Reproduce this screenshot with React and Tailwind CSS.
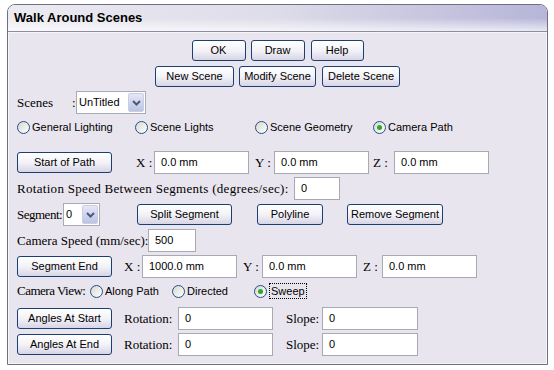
import React from "react";

const sans = "font-[family-name:Liberation_Sans,Arial,sans-serif] text-[11px] text-black";
const serif = "font-[family-name:Liberation_Serif,Times_New_Roman,serif] text-[13px] text-black whitespace-pre";

function Btn({ className, children }) {
  return (
    <button
      className={`flex h-[21px] items-center justify-center rounded-[3px] border border-[#1b3f73] bg-gradient-to-b from-white via-[#f3f2f7] to-[#d8d5e5] leading-none ${sans} ${className}`}
    >
      {children}
    </button>
  );
}

function Field({ className, value }) {
  return (
    <div className={`flex h-[23px] items-center border border-[#a9a9b3] bg-white pl-[6px] ${sans} ${className}`}>
      {value}
    </div>
  );
}

function Chevron() {
  return (
    <svg width="9" height="6" viewBox="0 0 9 6">
      <path d="M1 1 L4.5 4.5 L8 1" fill="none" stroke="#4a5a7e" strokeWidth="2" />
    </svg>
  );
}

function Select({ className, value }) {
  return (
    <div className={`flex h-[23px] border border-[#a5acb5] bg-white ${className}`}>
      <div className={`flex flex-1 items-center pl-[2px] ${sans}`}>{value}</div>
      <div className="m-[1px] flex w-[16px] items-center justify-center rounded-[2px] border border-[#c9cee8] bg-gradient-to-b from-[#e4e7f5] to-[#bcc4e2]">
        <Chevron />
      </div>
    </div>
  );
}

function Radio({ checked, label, className, focus }) {
  return (
    <div className={`flex items-center gap-[2px] ${className || ""}`}>
      <span className="flex h-[13px] w-[13px] items-center justify-center rounded-full border border-[#22508a] bg-gradient-to-br from-[#d8d8d0] to-white">
        {checked && <span className="h-[5px] w-[5px] rounded-full bg-[#2da82d]" />}
      </span>
      <span className={`${sans} ${focus ? "border border-dotted border-black px-[1px] leading-[14px]" : ""}`}>{label}</span>
    </div>
  );
}

export default function App() {
  return (
    <div className="h-[370px] w-[554px] bg-white pt-[4px]">
      <div className="ml-[7px] flex h-[361px] w-[541px] flex-col overflow-hidden rounded-t-[8px] border border-[#6f6f84]">
        <div className="h-[27px] border-b border-[#8d8ca0] bg-gradient-to-r from-[#ecebf1] via-[#dddce9] to-[#b7b5d8]">
          <div className="flex h-full items-center bg-gradient-to-b from-transparent via-transparent to-white/70 pl-[6px]">
            <span className="font-[family-name:Liberation_Sans,Arial,sans-serif] text-[13px] font-bold text-black">Walk Around Scenes</span>
          </div>
        </div>

        <div className="flex flex-1 flex-col border border-white/60 bg-[#e9e5ee]">
          <div className="mt-[7px] flex h-[21px] justify-center gap-[5px]">
            <Btn className="w-[54px]">OK</Btn>
            <Btn className="w-[54px]">Draw</Btn>
            <Btn className="ml-[1px] w-[53px]">Help</Btn>
          </div>

          <div className="mt-[5px] flex h-[20px] justify-center">
            <Btn className="h-[20px] w-[79px]">New Scene</Btn>
            <Btn className="ml-[5px] h-[20px] w-[77px]">Modify Scene</Btn>
            <Btn className="ml-[6px] h-[20px] w-[78px]">Delete Scene</Btn>
          </div>

          <div className="mt-[5px] flex h-[23px] items-center pl-[8px]">
            <span className={`${serif} w-[55px]`}>Scenes</span>
            <span className={`${serif} w-[4px]`}>:</span>
            <Select className="w-[70px]" value="UnTitled" />
          </div>

          <div className="mt-[6px] flex h-[14px] items-center pl-[8px]">
            <Radio className="w-[118px]" label="General Lighting" />
            <Radio className="w-[120px]" label="Scene Lights" />
            <Radio className="w-[118px]" label="Scene Geometry" />
            <Radio checked label="Camera Path" />
          </div>

          <div className="mt-[17px] flex h-[23px] items-center pl-[8px]">
            <Btn className="w-[95px]">Start of Path</Btn>
            <span className={`${serif} ml-[24px] w-[18px]`}>X :</span>
            <Field className="w-[95px]" value="0.0 mm" />
            <span className={`${serif} ml-[6px] w-[19px]`}>Y :</span>
            <Field className="w-[95px]" value="0.0 mm" />
            <span className={`${serif} ml-[4px] w-[21px]`}>Z :</span>
            <Field className="w-[95px]" value="0.0 mm" />
          </div>

          <div className="mt-[3px] flex h-[23px] items-center pl-[8px]">
            <span className={`${serif} w-[277px] tracking-[0.3px]`}>Rotation Speed Between Segments (degrees/sec):</span>
            <Field className="w-[46px]" value="0" />
          </div>

          <div className="mt-[3px] flex h-[23px] items-center pl-[8px]">
            <span className={`${serif} w-[46px] tracking-[-0.5px]`}>Segment:</span>
            <Select className="w-[37px]" value="0" />
            <Btn className="ml-[37px] w-[95px]">Split Segment</Btn>
            <Btn className="ml-[25px] w-[66px]">Polyline</Btn>
            <Btn className="ml-[24px] w-[96px]">Remove Segment</Btn>
          </div>

          <div className="mt-[3px] flex h-[23px] items-center pl-[8px]">
            <span className={`${serif} w-[131px]`}>Camera Speed (mm/sec):</span>
            <Field className="w-[48px]" value="500" />
          </div>

          <div className="mt-[3px] flex h-[23px] items-center pl-[8px]">
            <Btn className="w-[95px]">Segment End</Btn>
            <span className={`${serif} ml-[12px] w-[18px]`}>X :</span>
            <Field className="w-[95px]" value="1000.0 mm" />
            <span className={`${serif} ml-[6px] w-[19px]`}>Y :</span>
            <Field className="w-[95px]" value="0.0 mm" />
            <span className={`${serif} ml-[6px] w-[19px]`}>Z :</span>
            <Field className="w-[95px]" value="0.0 mm" />
          </div>

          <div className="mt-[5px] flex h-[16px] items-center pl-[8px]">
            <span className={`${serif} w-[73px] tracking-[-0.5px]`}>Camera View:</span>
            <Radio className="w-[82px]" label="Along Path" />
            <Radio className="w-[82px]" label="Directed" />
            <Radio checked focus label="Sweep" />
          </div>

          <div className="mt-[8px] flex h-[23px] items-center pl-[8px]">
            <Btn className="w-[95px]">Angles At Start</Btn>
            <span className={`${serif} ml-[12px] w-[54px]`}>Rotation:</span>
            <Field className="w-[95px]" value="0" />
            <span className={`${serif} ml-[13px] w-[36px]`}>Slope:</span>
            <Field className="w-[96px]" value="0" />
          </div>

          <div className="mt-[3px] flex h-[23px] items-center pl-[8px]">
            <Btn className="w-[95px]">Angles At End</Btn>
            <span className={`${serif} ml-[12px] w-[54px]`}>Rotation:</span>
            <Field className="w-[95px]" value="0" />
            <span className={`${serif} ml-[13px] w-[36px]`}>Slope:</span>
            <Field className="w-[96px]" value="0" />
          </div>
        </div>
      </div>
    </div>
  );
}
